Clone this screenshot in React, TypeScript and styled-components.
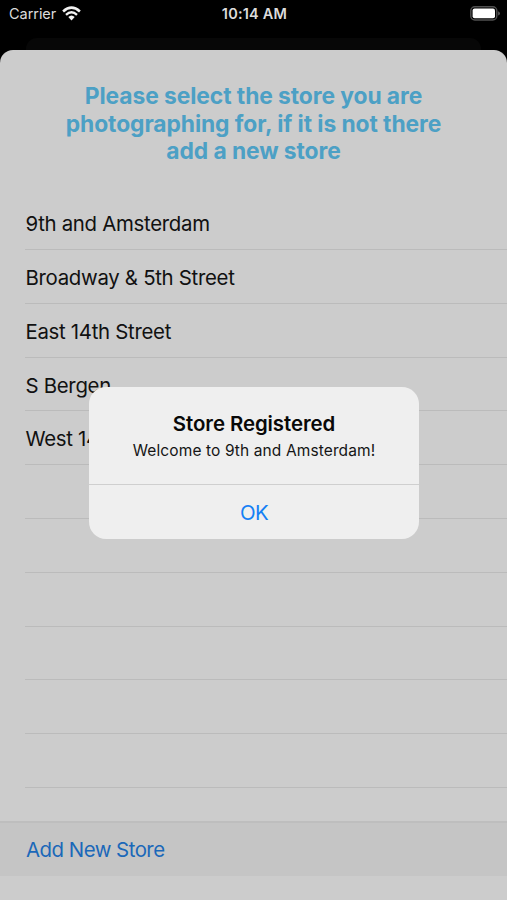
import React from "react";
import styled, { createGlobalStyle } from "styled-components";

const GlobalStyle = createGlobalStyle`
  * { box-sizing: border-box; }
  body {
    margin: 0;
    background: #000;
    font-family: Inter, "Liberation Sans", sans-serif;
  }
`;

const Screen = styled.main`
  position: relative;
  display: flex;
  flex-direction: column;
  width: 507px;
  height: 900px;
  overflow: hidden;
  background: #000;
`;

const StatusBar = styled.header`
  display: grid;
  grid-template-columns: 1fr auto 1fr;
  align-items: center;
  height: 28px;
  padding: 0 7px 0 9px;
  margin-bottom: 10px;
  color: #dcdcdc;
  font-size: 14.5px;
  line-height: 28px;
`;

const Carrier = styled.div`
  display: flex;
  align-items: center;
  gap: 6px;
  letter-spacing: -0.05px;

  svg {
    margin-top: -2px;
  }
`;

const Clock = styled.time`
  font-weight: 600;
  letter-spacing: 0.2px;
`;

const BatterySlot = styled.div`
  display: flex;
  justify-content: flex-end;
  margin-top: -2px;
`;

const SheetBehind = styled.div`
  flex: none;
  height: 12px;
  margin: 0 26px;
  border-radius: 11px 11px 0 0;
  background: #070707;
`;

const Sheet = styled.section`
  flex: 1;
  display: flex;
  flex-direction: column;
  border-radius: 13px 13px 0 0;
  background: #ccc;
`;

const Heading = styled.h1`
  height: 146.2px;
  margin: 0;
  padding-top: 32px;
  color: #4ca0c5;
  font-size: 22.8px;
  font-weight: 700;
  line-height: 27.7px;
  letter-spacing: -0.07px;
  text-align: center;
`;

const HeadingLine = styled.span`
  display: block;
`;

const StoreList = styled.ul`
  flex: none;
  height: 624.8px;
  margin: 0;
  padding: 0 0 0 25px;
  list-style: none;
`;

const StoreRow = styled.li`
  height: 53.8px;
  padding-left: 0.5px;
  border-bottom: 1px solid #bbb;
  color: #111;
  font-size: 20.4px;
  line-height: 55px;
  letter-spacing: -0.3px;
  white-space: nowrap;
`;

const AddStoreButton = styled.button`
  height: 55px;
  padding: 0 0 0 26px;
  border: 0;
  border-top: 2px solid #bebebe;
  background: #c5c5c5;
  color: #1b68b9;
  font: 400 20.4px/53px Inter, sans-serif;
  letter-spacing: -0.5px;
  text-align: left;
`;

const Overlay = styled.div`
  position: absolute;
  inset: 0;
  padding: 387px 88px 0 89px;
`;

const Alert = styled.div`
  height: 152px;
  border-radius: 17px;
  background: #efefef;
  overflow: hidden;
  text-align: center;
`;

const AlertBody = styled.div`
  height: 98px;
  padding-top: 23px;
  border-bottom: 1px solid #cfcfcf;
`;

const AlertTitle = styled.h2`
  margin: 0;
  color: #080808;
  font-size: 20.4px;
  font-weight: 600;
  line-height: 28px;
  letter-spacing: -0.07px;
`;

const AlertMessage = styled.p`
  margin: 0;
  color: #151515;
  font-size: 15.5px;
  line-height: 25px;
  letter-spacing: 0.11px;
`;

const AlertAction = styled.button`
  width: 100%;
  height: 54px;
  padding: 1px 0 0;
  border: 0;
  background: transparent;
  color: #1580f5;
  font: 400 20.4px/54px Inter, sans-serif;
  letter-spacing: -0.6px;
`;

const rows = [
  "9th and Amsterdam",
  "Broadway & 5th Street",
  "East 14th Street",
  "S Bergen",
  "West 14",
  "", "", "", "", "", "",
];

const WifiIcon = () => (
  <svg width="19" height="15" viewBox="0 0 19 15" fill="none" stroke="#f2f2f2">
    <path d="M1.1 5.5 Q9.5 -2.1 17.9 5.5" strokeWidth="2.6" />
    <path d="M4 8.8 Q9.5 3.9 15 8.8" strokeWidth="2.4" />
    <path d="M6.3 11.1 Q9.5 8 12.7 11.1 L9.5 14.4 Z" fill="#f2f2f2" stroke="none" />
  </svg>
);

const BatteryIcon = () => (
  <svg width="30" height="15" viewBox="0 0 30 15">
    <rect x="0.8" y="0.8" width="26" height="13.2" rx="4" fill="none" stroke="#505050" strokeWidth="1.4" />
    <rect x="2.6" y="2.6" width="22.4" height="9.6" rx="2" fill="#fff" />
    <path d="M28.2 5.2 Q29.9 6 29.9 7.4 Q29.9 8.8 28.2 9.6 Z" fill="#606060" />
  </svg>
);

export default function App() {
  return (
    <>
      <GlobalStyle />
      <Screen>
        <StatusBar>
          <Carrier>Carrier <WifiIcon /></Carrier>
          <Clock>10:14 AM</Clock>
          <BatterySlot><BatteryIcon /></BatterySlot>
        </StatusBar>
        <SheetBehind />
        <Sheet>
          <Heading>
            <HeadingLine>Please select the store you are</HeadingLine>
            <HeadingLine>photographing for, if it is not there</HeadingLine>
            <HeadingLine>add a new store</HeadingLine>
          </Heading>
          <StoreList>
            {rows.map((name, i) => <StoreRow key={i}>{name}</StoreRow>)}
          </StoreList>
          <AddStoreButton>Add New Store</AddStoreButton>
        </Sheet>
        <Overlay>
          <Alert role="alertdialog" aria-labelledby="alert-title">
            <AlertBody>
              <AlertTitle id="alert-title">Store Registered</AlertTitle>
              <AlertMessage>Welcome to 9th and Amsterdam!</AlertMessage>
            </AlertBody>
            <AlertAction>OK</AlertAction>
          </Alert>
        </Overlay>
      </Screen>
    </>
  );
}
